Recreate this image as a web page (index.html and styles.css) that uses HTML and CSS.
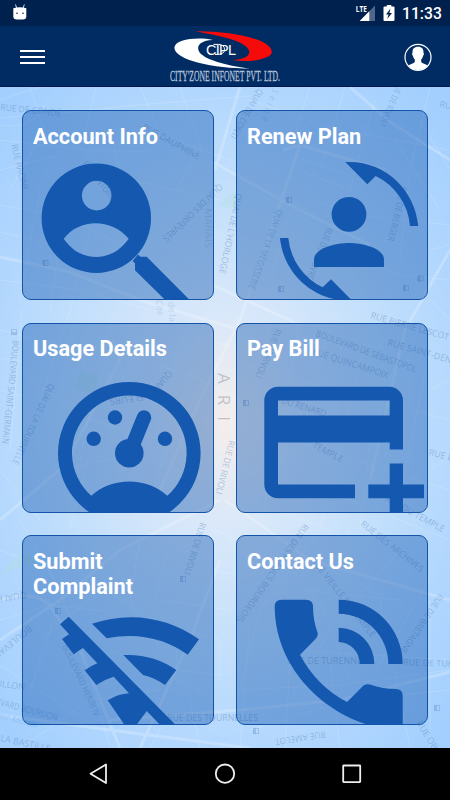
FILE: index.html
```
<!DOCTYPE html>
<html lang="en">
<head>
    <meta charset="UTF-8">
    <meta name="viewport" content="width=device-width, initial-scale=1.0">
    <title>Cityzone Infonet</title>
    <link rel="stylesheet" href="styles.css">
</head>
<body>
    <div class="status-bar">
        <svg class="debug-icon" width="16" height="18" viewBox="12 3 16 18">
            <path d="M15.500 4.500l1.300 4M24.300 4.500l-1.300 4" stroke="#d5dfec" stroke-width="1"/>
            <path d="M13.300 8.200q6.500-1.800 13 0v8q0 3.300-3.500 3.300h-6q-3.500 0-3.500-3.300z" fill="#fff"/>
            <circle cx="17" cy="13.300" r=".8" fill="#00204d"/>
            <circle cx="23" cy="13.300" r=".8" fill="#00204d"/>
        </svg>
        <div class="status-right">
            <svg width="20" height="20" viewBox="355 3 20 20">
                <path d="M375 5.500V21h-15.300z" fill="#4e6788"/>
                <path d="M369.300 11.300V21h-9.600z" fill="#fff"/>
                <text class="lte" x="355.800" y="11.700" textLength="11" lengthAdjust="spacingAndGlyphs">LTE</text>
            </svg>
            <svg width="12" height="18" viewBox="383 4 12 18">
                <path d="M386.800 5h4.500v1.500h2.200q1 0 1 1V20q0 1-1 1h-9q-1 0-1-1V7.500q0-1 1-1h2.300z" fill="#fff"/>
                <path d="M390.500 8.500l-4.500 6h2.500l-1.300 4.500 4.800-6h-2.600z" fill="#00204d"/>
            </svg>
            <span class="clock">11:33</span>
        </div>
    </div>

    <div class="header">
        <div class="menu-btn">
            <span></span>
            <span></span>
            <span></span>
        </div>
        <svg class="logo" width="116" height="56" viewBox="167 29 116 56">
            <path d="M195 31.200C226 30.500 272 38 271.800 52C271.600 59 250 62.800 233 60.200C249 58.500 253 53 246 46.500C239 40 220 35.500 195 31.200z" fill="#f60b0b"/>
            <path d="M213 40C201 40.500 196 45 199 51.500C203 59 225 65.500 250 68.500C214 68.500 174 60 174.400 47.500C175 39.500 197 36.500 213 40z" fill="#fff"/>
            <text class="logo-mark" x="206" y="54.600">CIPL</text>
            <path d="M213.500 44.400h5q6 .3 6 5t-6.500 5h-3" fill="none" stroke="#fff" stroke-width="1"/>
            <text class="logo-name" x="170" y="81" textLength="110" lengthAdjust="spacingAndGlyphs">CITY'ZONE INFONET PVT. LTD.</text>
        </svg>
        <svg class="profile" width="28" height="28" viewBox="404 43 28 28">
            <circle cx="418" cy="57.300" r="13" fill="none" stroke="#fff" stroke-width="1.200"/>
            <path d="M418 46.700c4 0 5.700 2.300 5.500 6 .8.500.3 2.700-.4 3.100-.4 1.800-1 2.900-1.900 3.600v2.500c1 1.600 4.500 1.700 6.300 3.500-2.300 2.900-5.700 4.700-9.500 4.700s-7.200-1.800-9.500-4.700c1.800-1.800 5.300-1.900 6.300-3.500v-2.500c-.9-.7-1.500-1.800-1.900-3.600-.7-.4-1.200-2.600-.4-3.100-.2-3.700 1.500-6 5.500-6z" fill="#fff"/>
        </svg>
    </div>

    <div class="main">
        <!-- Faded street map behind the cards -->
        <svg class="map" width="450" height="661" viewBox="0 87 450 661">
            <g class="roads-thin">
                <path d="M0 118L70 112L150 104L250 96M0 140L90 150L150 152M30 87L44 130L10 190M96 87L84 140L120 200M0 170L60 155M140 87L160 135L230 160M180 87L202 150L175 190M0 205L70 218L130 250M0 232L60 246L120 274M40 190L20 300M66 200L50 310M0 280L80 290L150 310M90 230L70 310L40 400"/>
                <path d="M110 130L130 210L150 260M60 130L110 175L220 200M250 100L330 128L450 150M310 87L290 150M345 87L320 170M375 100L350 190L325 260M430 87L410 170L400 260M300 170L350 190L390 170M310 200L360 215L450 225M240 235L330 280M290 155L350 175M420 120L450 170M395 140L440 210M340 250L400 275L450 280M290 210L265 300"/>
                <path d="M0 330L60 345L110 350L205 380M22 310L10 450M70 330L95 390L80 460M110 330L130 400M30 380L90 420L200 450M205 320L170 440L145 512M190 320L150 420M60 470L130 455L210 480M0 470L40 520M90 450L70 530M180 370L240 400M205 340L245 350M236 360L330 390L450 420M240 330L225 480M270 322L255 400M300 322L280 430L262 520M330 330L300 440M365 340L340 450L320 530M400 350L370 440L360 530M430 350L405 470M240 420L320 450L450 490M240 470L350 500L450 540M250 500L330 530"/>
                <path d="M0 550L50 570L80 640L110 748M20 520L60 590M0 620L50 605L110 612M40 640L100 590L150 540M90 540L120 600L190 640M60 600L30 690M140 540L130 600L160 650M170 540L155 600M160 600L230 610M180 630L175 670L220 675V640L180 630M110 650L200 690M0 665L110 735M20 748L90 700L160 690M150 748L165 720M190 700L200 748M240 550L330 570L430 620M260 535L320 600L350 680M320 530L260 610L240 690M350 530L300 620M400 550L330 630L290 700M430 580L370 680M236 640L290 650L450 660M250 620L240 748M290 660L285 748M330 660L340 748M380 600L410 748M430 600V748M236 690L340 685L450 670M250 730L350 700L450 690M300 590L400 600"/>
                <path d="M0 358L22 362M0 390L22 396M430 250L450 245M430 390L450 380M430 470L450 455M430 300L450 320M215 530L236 540M215 570L236 575M0 100Q40 85 50 87M0 125Q35 130 45 105"/>
            </g>
            <g class="roads">
                <path d="M0 257L70 272L140 300L240 330M213 162L290 205L370 245M283 150L300 145L385 170M300 145L240 320L205 390L150 512M240 87L215 170M130 340L65 465L0 520M213 285L300 325M0 600Q30 590 48 603L80 650L120 748M0 640L60 600L120 550L220 500M225 500L310 560L450 600M110 720L240 710L340 700L450 672M220 560L190 640L140 748M450 250L405 330L370 480M450 160L390 122L350 87M0 715L110 730L250 748"/>
            </g>
            <g class="parks">
                <path d="M0 575L40 560L20 552Z"/>
                <path d="M218 205L236 190V210Z"/>
                <path d="M80 370L98 375L94 395L76 388Z"/>
            </g>
            <g class="stops">
                <path d="M43 260.500h5v5h-5zM286.500 197.500h5v5h-5zM278.500 286.500h5v5h-5zM403.500 285.500h5v5h-5zM418 276h5v5h-5zM11.500 329.500h5v5h-5zM243.500 400.500h5v5h-5zM55.500 608.500h5v5h-5zM180.500 576.500h5v5h-5zM253.500 728.500h5v5h-5zM434.500 705.500h5v5h-5z"/>
                <path class="half" d="M43 260.500h2.500v5H43zM286.500 197.500h2.500v5h-2.500zM278.500 286.500h2.500v5h-2.500zM403.500 285.500h2.500v5h-2.500zM418 276h2.500v5H418zM11.500 332h5v2.500h-5zM243.500 400.500h2.500v5h-2.500zM55.500 608.500h2.500v5h-2.500zM180.500 576.500h2.500v5h-2.500zM253.500 728.500h2.500v5h-2.500zM434.500 705.500h2.500v5h-2.500z"/>
            </g>
            <g class="streets">
                <text transform="translate(0 110) rotate(6)" textLength="61" lengthAdjust="spacingAndGlyphs">RUE DE CONDÉ</text>
                <text transform="translate(142 129) rotate(29)" textLength="64" lengthAdjust="spacingAndGlyphs">RUE DAUPHINE</text>
                <text transform="translate(11 145) rotate(76)" textLength="48" lengthAdjust="spacingAndGlyphs">RUE RACINE</text>
                <text transform="translate(82 164) rotate(52)" textLength="50" lengthAdjust="spacingAndGlyphs">RUE ANTOINE</text>
                <text transform="translate(219 183) rotate(136)" textLength="79" lengthAdjust="spacingAndGlyphs">QUAI DES ORFÈVRES</text>
                <text class="faint" transform="translate(205 208) rotate(90)" textLength="40" lengthAdjust="spacingAndGlyphs">MARAIS</text>
                <text transform="translate(236 193) rotate(102)" textLength="82" lengthAdjust="spacingAndGlyphs">QUAI DE L'HORLOGE</text>
                <text transform="translate(258 88) rotate(120)" textLength="56" lengthAdjust="spacingAndGlyphs">QUAI DE CONTI</text>
                <text class="water" transform="translate(273 88) rotate(110)" textLength="34">Seine</text>
                <text transform="translate(277 209) rotate(110)" textLength="84" lengthAdjust="spacingAndGlyphs">QUAI DE LA MÉGISSERIE</text>
                <text transform="translate(398 80) rotate(112)" textLength="48" lengthAdjust="spacingAndGlyphs">RUE DE RIVOLI</text>
                <text transform="translate(401 186) rotate(104)" textLength="56" lengthAdjust="spacingAndGlyphs">RUE DE BERGER</text>
                <text transform="translate(439 107) rotate(12)">RUE</text>
                <text transform="translate(327 227) rotate(112)" textLength="55" lengthAdjust="spacingAndGlyphs">RUE DU LOUVRE</text>
                <text transform="translate(370 318) rotate(16)" textLength="81" lengthAdjust="spacingAndGlyphs">RUE PIERRE LESCOT</text>
                <text transform="translate(315 336) rotate(20)" textLength="107" lengthAdjust="spacingAndGlyphs">BOULEVARD DE SÉBASTOPOL</text>
                <text transform="translate(387 345) rotate(16)" textLength="74" lengthAdjust="spacingAndGlyphs">RUE SAINT-DENIS</text>
                <text transform="translate(312 354) rotate(18)" textLength="79" lengthAdjust="spacingAndGlyphs">RUE QUINCAMPOIX</text>
                <text transform="translate(264 398) rotate(17)" textLength="64" lengthAdjust="spacingAndGlyphs">RUE DU RENARD</text>
                <text transform="translate(312 447) rotate(28)" textLength="33" lengthAdjust="spacingAndGlyphs">TEMPLE</text>
                <text transform="translate(276 328) rotate(113)" textLength="53" lengthAdjust="spacingAndGlyphs">RUE DE RIVOLI</text>
                <text transform="translate(13 340) rotate(96)" textLength="104" lengthAdjust="spacingAndGlyphs">BOULEVARD SAINT-GERMAIN</text>
                <text transform="translate(49 383) rotate(115)" textLength="88" lengthAdjust="spacingAndGlyphs">QUAI DE LA TOURNELLE</text>
                <text transform="translate(168 370) rotate(130)" textLength="20" lengthAdjust="spacingAndGlyphs">QUAI</text>
                <text transform="translate(143 394) rotate(172)" textLength="34" lengthAdjust="spacingAndGlyphs">FLEURS</text>
                <text transform="translate(428 455) rotate(14)">RUE B</text>
                <text transform="translate(384 500) rotate(29)" textLength="67" lengthAdjust="spacingAndGlyphs">RUE DU TEMPLE</text>
                <text transform="translate(229 440) rotate(104)" textLength="55" lengthAdjust="spacingAndGlyphs">RUE DE RIVOLI</text>
                <text transform="translate(200 522) rotate(107)" textLength="54" lengthAdjust="spacingAndGlyphs">RUE DE RIVOLI</text>
                <text class="faint" transform="translate(156 300) rotate(86)">Cité</text>
                <text class="faint" transform="translate(168 302) rotate(86)">de la</text>
                <text transform="translate(26 592) rotate(172)">QUAI HENRI</text>
                <text transform="translate(29 625) rotate(141)">BOULEVARD</text>
                <text transform="translate(62 646) rotate(65)" textLength="78" lengthAdjust="spacingAndGlyphs">BOULEVARD HENRI IV</text>
                <text transform="translate(-5 686) rotate(8)">ULLON</text>
                <text transform="translate(-24 699) rotate(15)" textLength="84" lengthAdjust="spacingAndGlyphs">BOULEVARD BOURDON</text>
                <text class="water" transform="translate(-4 718) rotate(14)">ent-Martin</text>
                <text transform="translate(0 741) rotate(12)">LA BASTILLE</text>
                <text transform="translate(167 721)" textLength="91" lengthAdjust="spacingAndGlyphs">RUE DES TOURNELLES</text>
                <text transform="translate(304 523) rotate(125)" textLength="118" lengthAdjust="spacingAndGlyphs">RUE DES FRANCS BOURGEOIS</text>
                <text transform="translate(311 561) rotate(52)" textLength="98" lengthAdjust="spacingAndGlyphs">RUE VIEILLE DU TEMPLE</text>
                <text transform="translate(360 525) rotate(38)" textLength="77" lengthAdjust="spacingAndGlyphs">RUE DES ARCHIVES</text>
                <text transform="translate(288 664)" textLength="74" lengthAdjust="spacingAndGlyphs">RUE DE TURENNE</text>
                <text transform="translate(403 665) rotate(2)" textLength="74" lengthAdjust="spacingAndGlyphs">RUE DE TURENNE</text>
                <text transform="translate(439 593) rotate(124)" textLength="70" lengthAdjust="spacingAndGlyphs">RUE DE BRETAGNE</text>
                <text transform="translate(325 731) rotate(171)" textLength="51" lengthAdjust="spacingAndGlyphs">RUE AMELOT</text>
                <text transform="translate(416 723) rotate(58)">RUE OBER</text>
                <text class="city" transform="translate(218 373) rotate(90)">ARI</text>
            </g>
        </svg>

        <div class="card-grid">
            <div class="card">
                <h2>Account Info</h2>
                <svg class="card-icon" viewBox="22 110 192 190">
                    <path fill-rule="evenodd" d="M96.300 163.600a54.700 54.700 0 1 1 0 109.400a54.700 54.700 0 1 1 0-109.400zM96.700 180.800a14.800 14.800 0 1 0 0 29.600a14.800 14.800 0 1 0 0-29.600zM63.700 238.700C79 218 112 218 128.700 238.700C112 263 80 263 63.700 238.700z"/>
                    <path d="M138 254.400l2.300 2.300h6.400L190.700 301h-24.500L135 270.300v-7l-2.400-2.400z"/>
                </svg>
            </div>
            <div class="card">
                <h2>Renew Plan</h2>
                <svg class="card-icon" viewBox="236 110 192 190">
                    <circle cx="349" cy="214.300" r="17.400"/>
                    <path d="M314 267v-7.300C314 248.500 335 243 349 243s35 5.500 35 16.700v7.300z"/>
                    <path d="M345.300 162C385 160 415 190 418.300 226H410A61 61 0 0 0 375.700 176L367.300 184.300z"/>
                    <path d="M280 238h8.300A61 61 0 0 0 322.700 287.300L331 279.300L352 300.500C314 302 283.500 274 280 238z"/>
                </svg>
            </div>
            <div class="card">
                <h2>Usage Details</h2>
                <svg class="card-icon" viewBox="22 322.500 192 190">
                    <path fill-rule="evenodd" d="M129.300 381.400a71.300 71.300 0 1 1 0 142.600a71.300 71.300 0 1 1 0-142.600zM91.300 495.300C112 476.200 146.500 476.200 167.300 495.300A57.300 57.300 0 1 0 91.300 495.300z"/>
                    <circle cx="115" cy="417" r="7.200"/>
                    <circle cx="93.700" cy="438.300" r="7.200"/>
                    <circle cx="165" cy="438.300" r="7.200"/>
                    <circle cx="129.300" cy="452.700" r="14.300"/>
                    <path class="needle" d="M134 441.500l10-24.500"/>
                </svg>
            </div>
            <div class="card">
                <h2>Pay Bill</h2>
                <svg class="card-icon" viewBox="236 322.500 192 190">
                    <path fill-rule="evenodd" d="M278 386.300h111.300a13.700 13.700 0 0 1 13.700 13.700v49h-13.300v-7H278v42h77v13.700h-77a13.700 13.700 0 0 1-13.700-13.700v-84a13.700 13.700 0 0 1 13.700-13.700zM278 400v15h111.700v-15z"/>
                    <path d="M389.700 463H403v21h21v13.700h-21V514h-13.300v-16.300h-21.400V484h21.400z"/>
                </svg>
            </div>
            <div class="card">
                <h2>Submit Complaint</h2>
                <svg class="card-icon" viewBox="22 535 192 190">
                    <path d="M68.700 616.700L177 726.300H161.500L146.700 711L135.500 726.300H125.500L107.700 700.300Q118 694 129 693.300L113.700 676.700Q104 679.500 96.300 685L84.700 670.300Q90.500 666 97.300 663.300L83 648Q78 651 73.700 654.300L62 639L69 634.300L60 624.300z"/>
                    <path d="M92 623.700C129 611 168 617 199 639.300L187.700 654.700Q152 629.500 106.700 638.300z"/>
                    <path d="M123.300 655Q153 653.500 176.300 670L165 685Q154 677.500 143 675z"/>
                </svg>
            </div>
            <div class="card">
                <h2>Contact Us</h2>
                <svg class="card-icon" viewBox="236 535 192 190">
                    <path d="M281.700 599.700H306q7 0 7 7Q313 620 317.500 632.500Q318.500 635.500 316 638.500L300 654.700Q316.500 686 347 702L361.500 687.500Q365 683.200 370 684.500Q383 689 395.700 689q7 0 7 7V728Q380 728 364 723.500C314 706 275 661 274.700 606.700q0-7 7-7z"/>
                    <path d="M338.700 599.700A64 64.300 0 0 1 402.700 664H388.300A49.600 50.300 0 0 0 338.700 613.700z"/>
                    <path d="M338.700 627.700A35.600 36.300 0 0 1 374.300 664H359.700A21 22 0 0 0 338.700 642z"/>
                </svg>
            </div>
        </div>
    </div>

    <div class="nav-bar">
        <svg width="450" height="52" viewBox="0 748 450 52">
            <path d="M106 764.500v18.600L90.500 773.800z"/>
            <circle cx="225" cy="773.700" r="9.200"/>
            <rect x="343.200" y="765.500" width="17" height="16.600" rx=".5"/>
        </svg>
    </div>
</body>
</html>
```
FILE: styles.css
```
* {
    box-sizing: border-box;
}

body {
    margin: 0;
    width: 450px;
    height: 800px;
    display: flex;
    flex-direction: column;
    overflow: hidden;
    font-family: Roboto, sans-serif;
    background-color: #000;
}

svg {
    display: block;
}

/* Status bar */
.status-bar {
    height: 26px;
    flex: none;
    display: flex;
    justify-content: space-between;
    padding: 3px 9px 0 12px;
    background-color: #00204d;
}

.status-right {
    display: flex;
    align-items: center;
    gap: 8px;
    height: 20px;
}

.lte {
    font-family: "Open Sans", sans-serif;
    font-size: 8.5px;
    font-weight: 700;
    fill: #fff;
}

.clock {
    width: 39px;
    margin-top: 2px;
    margin-left: -1px;
    color: #fff;
    font-size: 15.7px;
    font-weight: 500;
    line-height: 18px;
    white-space: nowrap;
}

/* Header */
.header {
    height: 61px;
    flex: none;
    display: flex;
    align-items: center;
    justify-content: space-between;
    padding: 1px 18px 0 20px;
    background-color: #002c63;
    border-bottom: 1px solid #001650;
}

.menu-btn {
    display: flex;
    flex-direction: column;
    gap: 4px;
    padding-top: 1px;
}

.menu-btn span {
    width: 25px;
    height: 2px;
    background-color: #fff;
}

.logo {
    margin-left: 104px;
    margin-right: 103px;
}

.logo-mark {
    font-family: "Liberation Sans", sans-serif;
    font-size: 14.5px;
    letter-spacing: -0.7px;
    fill: #fff;
}

.logo-name {
    font-family: "Liberation Serif", serif;
    font-size: 15.5px;
    fill: #b9c6dc;
    stroke: #b9c6dc;
    stroke-width: 0.3;
}

/* Main area with map background */
.main {
    position: relative;
    height: 661px;
    flex: none;
    padding: 23px 22px;
    background: radial-gradient(ellipse 310px 430px at 225px 335px, #f5eeeb 0%, #d9e8fa 25%, #c4e0fc 52%, #b0d6fe 80%, #a3cffe 100%);
}

.map {
    position: absolute;
    top: 0;
    left: 0;
}

.roads-thin path {
    fill: none;
    stroke: #fff;
    stroke-opacity: 0.16;
    stroke-width: 1;
}

.roads path {
    fill: none;
    stroke: #fff;
    stroke-opacity: 0.22;
    stroke-width: 3;
}

.parks path {
    fill: #aee0d8;
    fill-opacity: 0.3;
}

.stops path {
    fill: none;
    stroke: #5a88c0;
    stroke-opacity: 0.3;
    stroke-width: 1;
}

.stops .half {
    fill: #5a88c0;
    fill-opacity: 0.3;
    stroke: none;
}

.streets text {
    font-family: "Open Sans", sans-serif;
    font-size: 9px;
    fill: #4674a8;
    fill-opacity: 0.36;
}

.streets .faint {
    fill-opacity: 0.2;
}

.streets .water {
    fill: #5aa5e0;
    font-style: italic;
}

.streets .city {
    font-size: 17px;
    letter-spacing: 11px;
    fill: #8a8a95;
    fill-opacity: 0.45;
}

/* Cards */
.card-grid {
    position: relative;
    display: grid;
    grid-template-columns: 192px 192px;
    grid-auto-rows: 190px;
    gap: 22.5px 22px;
}

.card {
    position: relative;
    overflow: hidden;
    padding: 12.5px 10px;
    border: 1px solid #1353a8;
    border-radius: 9px;
    background-color: rgba(10, 80, 170, 0.4);
}

.card h2 {
    margin: 0;
    color: #fff;
    font-size: 21.7px;
    font-weight: 700;
    line-height: 25px;
}

.card-icon {
    position: absolute;
    top: -1px;
    left: -1px;
    width: 192px;
    height: 190px;
    fill: #1458b0;
}

.needle {
    stroke: #1458b0;
    stroke-width: 14.4;
    stroke-linecap: round;
}

/* Android navigation */
.nav-bar {
    height: 52px;
    flex: none;
    background-color: #000;
}

.nav-bar path,
.nav-bar circle,
.nav-bar rect {
    fill: none;
    stroke: #eee;
    stroke-width: 1.8;
    stroke-linejoin: round;
}
```
